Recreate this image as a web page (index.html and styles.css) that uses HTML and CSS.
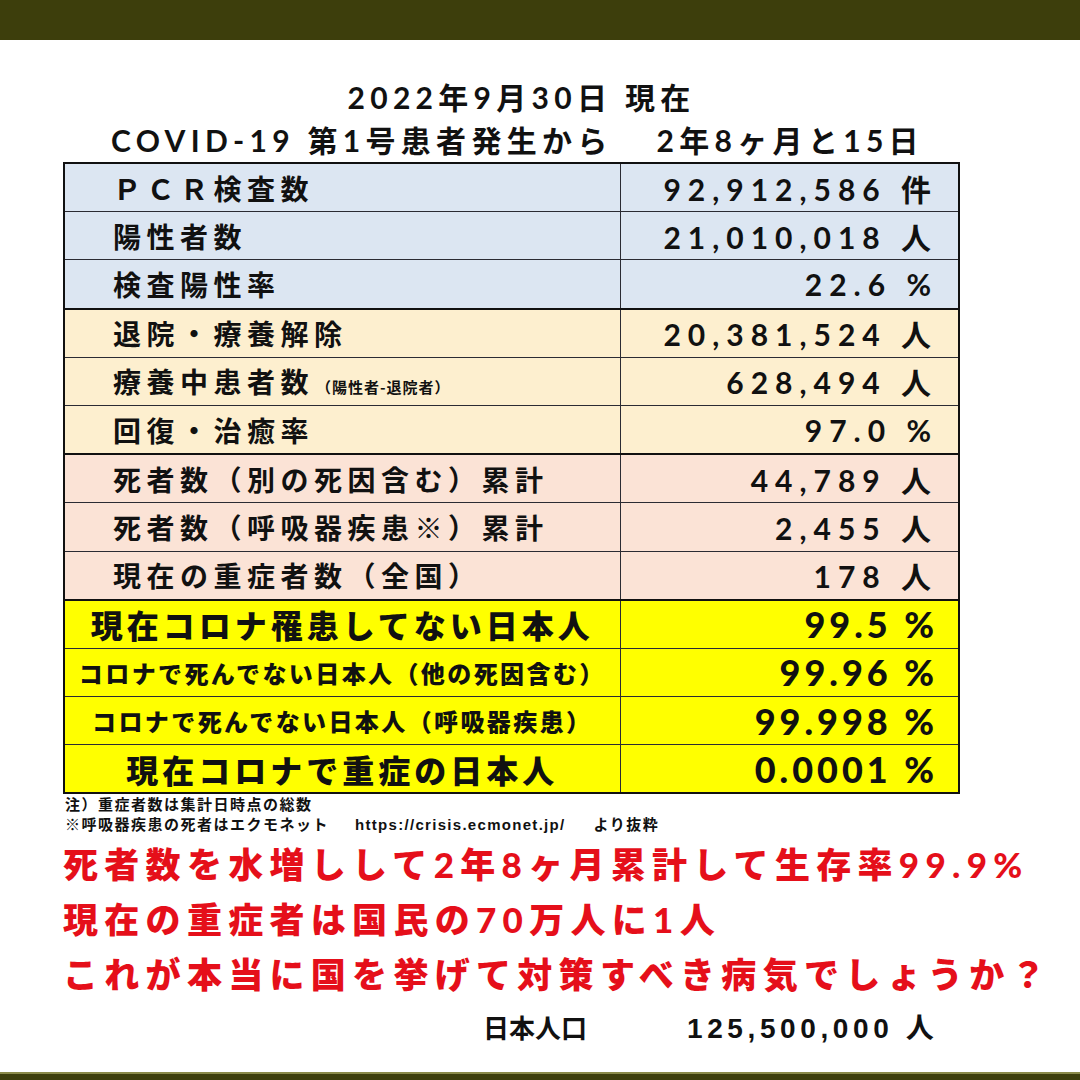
FILE: index.html
```html
<!DOCTYPE html>
<html lang="ja">
<head>
<meta charset="utf-8">
<title>COVID-19 統計</title>
<link rel="stylesheet" href="styles.css">
</head>
<body>
<div class="page">
  <div class="band-top"></div>
  <main class="content">
    <div class="title">
      <div class="t1">2022年9月30日 現在</div>
      <div class="t2">COVID-19 第1号患者発生から<span class="gap"></span>2年8ヶ月と15日</div>
    </div>
    <table class="stats">
      <colgroup><col class="c-left"><col class="c-right"></colgroup>
      <tr class="blue"><td class="lbl">ＰＣＲ検査数</td><td class="val">92,912,586 件</td></tr>
      <tr class="blue"><td class="lbl">陽性者数</td><td class="val">21,010,018 人</td></tr>
      <tr class="blue"><td class="lbl">検査陽性率</td><td class="val">22.6 %</td></tr>
      <tr class="beige sep"><td class="lbl">退院・療養解除</td><td class="val">20,381,524 人</td></tr>
      <tr class="beige"><td class="lbl">療養中患者数<span class="small">（陽性者-退院者）</span></td><td class="val">628,494 人</td></tr>
      <tr class="beige"><td class="lbl">回復・治癒率</td><td class="val">97.0 %</td></tr>
      <tr class="pink sep"><td class="lbl">死者数（別の死因含む）累計</td><td class="val">44,789 人</td></tr>
      <tr class="pink"><td class="lbl">死者数（呼吸器疾患※）累計</td><td class="val">2,455 人</td></tr>
      <tr class="pink"><td class="lbl">現在の重症者数（全国）</td><td class="val">178 人</td></tr>
      <tr class="yellow sep"><td class="ylbl big">現在コロナ罹患してない日本人</td><td class="yval">99.5 %</td></tr>
      <tr class="yellow"><td class="ylbl">コロナで死んでない日本人（他の死因含む）</td><td class="yval">99.96 %</td></tr>
      <tr class="yellow"><td class="ylbl">コロナで死んでない日本人（呼吸器疾患）</td><td class="yval">99.998 %</td></tr>
      <tr class="yellow"><td class="ylbl big">現在コロナで重症の日本人</td><td class="yval">0.0001 %</td></tr>
    </table>
    <div class="notes">
      <div>注）重症者数は集計日時点の総数</div>
      <div>※呼吸器疾患の死者はエクモネット<span class="url">https://crisis.ecmonet.jp/</span>より抜粋</div>
    </div>
    <div class="red">
      <div>死者数を水増しして2年8ヶ月累計して生存率99.9%</div>
      <div>現在の重症者は国民の70万人に1人</div>
      <div>これが本当に国を挙げて対策すべき病気でしょうか？</div>
    </div>
    <div class="pop"><span class="pop-label">日本人口</span><span class="pop-num">125,500,000 人</span></div>
  </main>
  <div class="band-bottom"></div>
</div>
</body>
</html>
```

FILE: styles.css
```css
html, body {
  margin: 0;
  padding: 0;
  background: #ffffff;
}

.page {
  width: 1080px;
  height: 1080px;
  display: flex;
  flex-direction: column;
  overflow: hidden;
  font-family: "Noto Sans CJK JP", sans-serif;
  color: #111111;
}

.band-top {
  flex: none;
  height: 40px;
  background: #3d3e0c;
}

.content {
  flex: 1;
  padding-left: 63px;
}

.title {
  width: 895px;
  margin-top: 36px;
  text-align: center;
  font-family: "Lato", "Noto Sans CJK JP", sans-serif;
  font-weight: 700;
  font-size: 30px;
  line-height: 43px;
  letter-spacing: 5.3px;
  white-space: nowrap;
}

.t1 {
  padding-left: 22px;
}

.t2 {
  padding-left: 14px;
}

.gap {
  display: inline-block;
  width: 44px;
}

.stats {
  width: 895px;
  border-collapse: collapse;
  table-layout: fixed;
  border: 2px solid #111111;
}

.c-left {
  width: 556px;
}

.c-right {
  width: 339px;
}

.stats td {
  height: 47.2px;
  padding: 0;
  border: 1px solid #2b2b33;
  vertical-align: middle;
  white-space: nowrap;
}

.stats tr.sep td {
  border-top: 2px solid #111111;
}

.blue td { background: #dce6f2; }
.beige td { background: #fdefcf; }
.pink td { background: #fbe3d6; }
.yellow td { background: #ffff00; }

.lbl {
  padding-left: 48px !important;
  font-family: "Noto Sans CJK JP", sans-serif;
  font-weight: 700;
  font-size: 28px;
  letter-spacing: 5.5px;
}

.small {
  font-size: 15px;
  letter-spacing: 1px;
  margin-left: 2px;
}

.val {
  text-align: right;
  padding-right: 20px !important;
  font-family: "Lato", "Noto Sans CJK JP", sans-serif;
  font-weight: 700;
  font-size: 30px;
  letter-spacing: 7px;
}

.ylbl {
  text-align: center;
  font-family: "Noto Sans CJK JP", sans-serif;
  font-weight: 900;
  font-size: 24px;
  letter-spacing: 2.4px;
}

.ylbl.big {
  font-size: 32px;
  letter-spacing: 4px;
}

.yval {
  text-align: right;
  padding-right: 20px !important;
  font-family: "Lato", "Noto Sans CJK JP", sans-serif;
  font-weight: 900;
  font-size: 36px;
  letter-spacing: 4px;
}

.notes {
  padding-left: 2px;
  font-family: "Noto Sans CJK JP", sans-serif;
  font-weight: 700;
  font-size: 15px;
  line-height: 20px;
  letter-spacing: 1.5px;
  white-space: nowrap;
}

.url {
  font-family: "Liberation Sans Narrow", "Liberation Sans", sans-serif;
  letter-spacing: 1.3px;
  margin: 0 28px 0 26px;
}

.red {
  margin-top: 2px;
  color: #e50f1a;
  font-family: "Lato", "Noto Sans CJK JP", sans-serif;
  font-weight: 900;
  font-size: 35px;
  line-height: 55px;
  letter-spacing: 6.3px;
  white-space: nowrap;
}

.pop {
  margin-top: 5px;
  padding-left: 420px;
  font-family: "Noto Sans CJK JP", sans-serif;
  font-weight: 700;
  font-size: 26px;
  line-height: 40px;
  white-space: nowrap;
}

.pop-num {
  margin-left: 100px;
  font-family: "Liberation Sans Narrow", "Liberation Sans", "Noto Sans CJK JP", sans-serif;
  font-size: 28px;
  letter-spacing: 4.6px;
}

.band-bottom {
  flex: none;
  height: 6px;
  background: #3d3e0c;
  border-top: 2px solid #8a8a4a;
}
```
